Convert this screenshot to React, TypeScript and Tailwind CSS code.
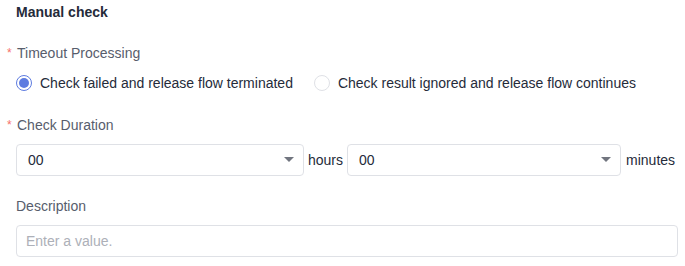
import React from "react";

function Caret() {
  return (
    <svg width="10" height="6" viewBox="0 0 10 6" className="shrink-0">
      <path d="M0 0 L10 0 L5 5 Z" fill="#71757f" />
    </svg>
  );
}

function Select({ value, className }: { value: string; className: string }) {
  return (
    <div
      className={`flex h-[32px] items-center justify-between rounded-[4px] border border-[#dfe1e6] bg-white pl-[11px] pr-[9px] ${className}`}
    >
      <span className="text-[14px] text-[#252b3a]">{value}</span>
      <Caret />
    </div>
  );
}

function Radio({ checked, label }: { checked: boolean; label: string }) {
  return (
    <div className="flex items-center">
      {checked ? (
        <span className="flex h-[16px] w-[16px] items-center justify-center rounded-full border border-[#5e7ce0] bg-white">
          <span className="h-[10px] w-[10px] rounded-full bg-[#5e7ce0]" />
        </span>
      ) : (
        <span className="h-[16px] w-[16px] rounded-full border border-[#dfe1e6] bg-white" />
      )}
      <span className="ml-[8px] text-[14px] leading-[20px] text-[#252b3a]">{label}</span>
    </div>
  );
}

export default function App() {
  return (
    <div
      className="h-[266px] w-[685px] bg-white pl-[16px]"
      style={{ fontFamily: '"Liberation Sans", Arial, sans-serif' }}
    >
      <div className="h-[24px] text-[14px] font-bold leading-[24px] text-[#252b3a]">Manual check</div>

      <div className="relative mt-[19px] h-[20px] text-[14px] leading-[20px] text-[#575d6c]">
        <span className="absolute left-[-9px] top-0 text-[12px] text-[#f66f6a]">*</span>
        <span className="pl-[1px]">Timeout Processing</span>
      </div>

      <div className="mt-[10px] flex items-center gap-[21px]">
        <Radio checked label="Check failed and release flow terminated" />
        <Radio checked={false} label="Check result ignored and release flow continues" />
      </div>

      <div className="relative mt-[22px] h-[20px] text-[14px] leading-[20px] text-[#575d6c]">
        <span className="absolute left-[-9px] top-0 text-[12px] text-[#f66f6a]">*</span>
        <span className="pl-[1px]">Check Duration</span>
      </div>

      <div className="mt-[9px] flex items-center">
        <Select value="00" className="w-[288px]" />
        <span className="mx-[4px] text-[14px] text-[#252b3a]">hours</span>
        <Select value="00" className="w-[274px]" />
        <span className="ml-[5px] text-[14px] text-[#252b3a]">minutes</span>
      </div>

      <div className="mt-[20px] h-[20px] text-[14px] leading-[20px] text-[#575d6c]">Description</div>

      <div className="mt-[9px] flex h-[32px] w-[662px] items-center rounded-[4px] border border-[#dfe1e6] bg-white pl-[9px]">
        <span className="text-[14px] text-[#adb0b8]">Enter a value.</span>
      </div>
    </div>
  );
}
